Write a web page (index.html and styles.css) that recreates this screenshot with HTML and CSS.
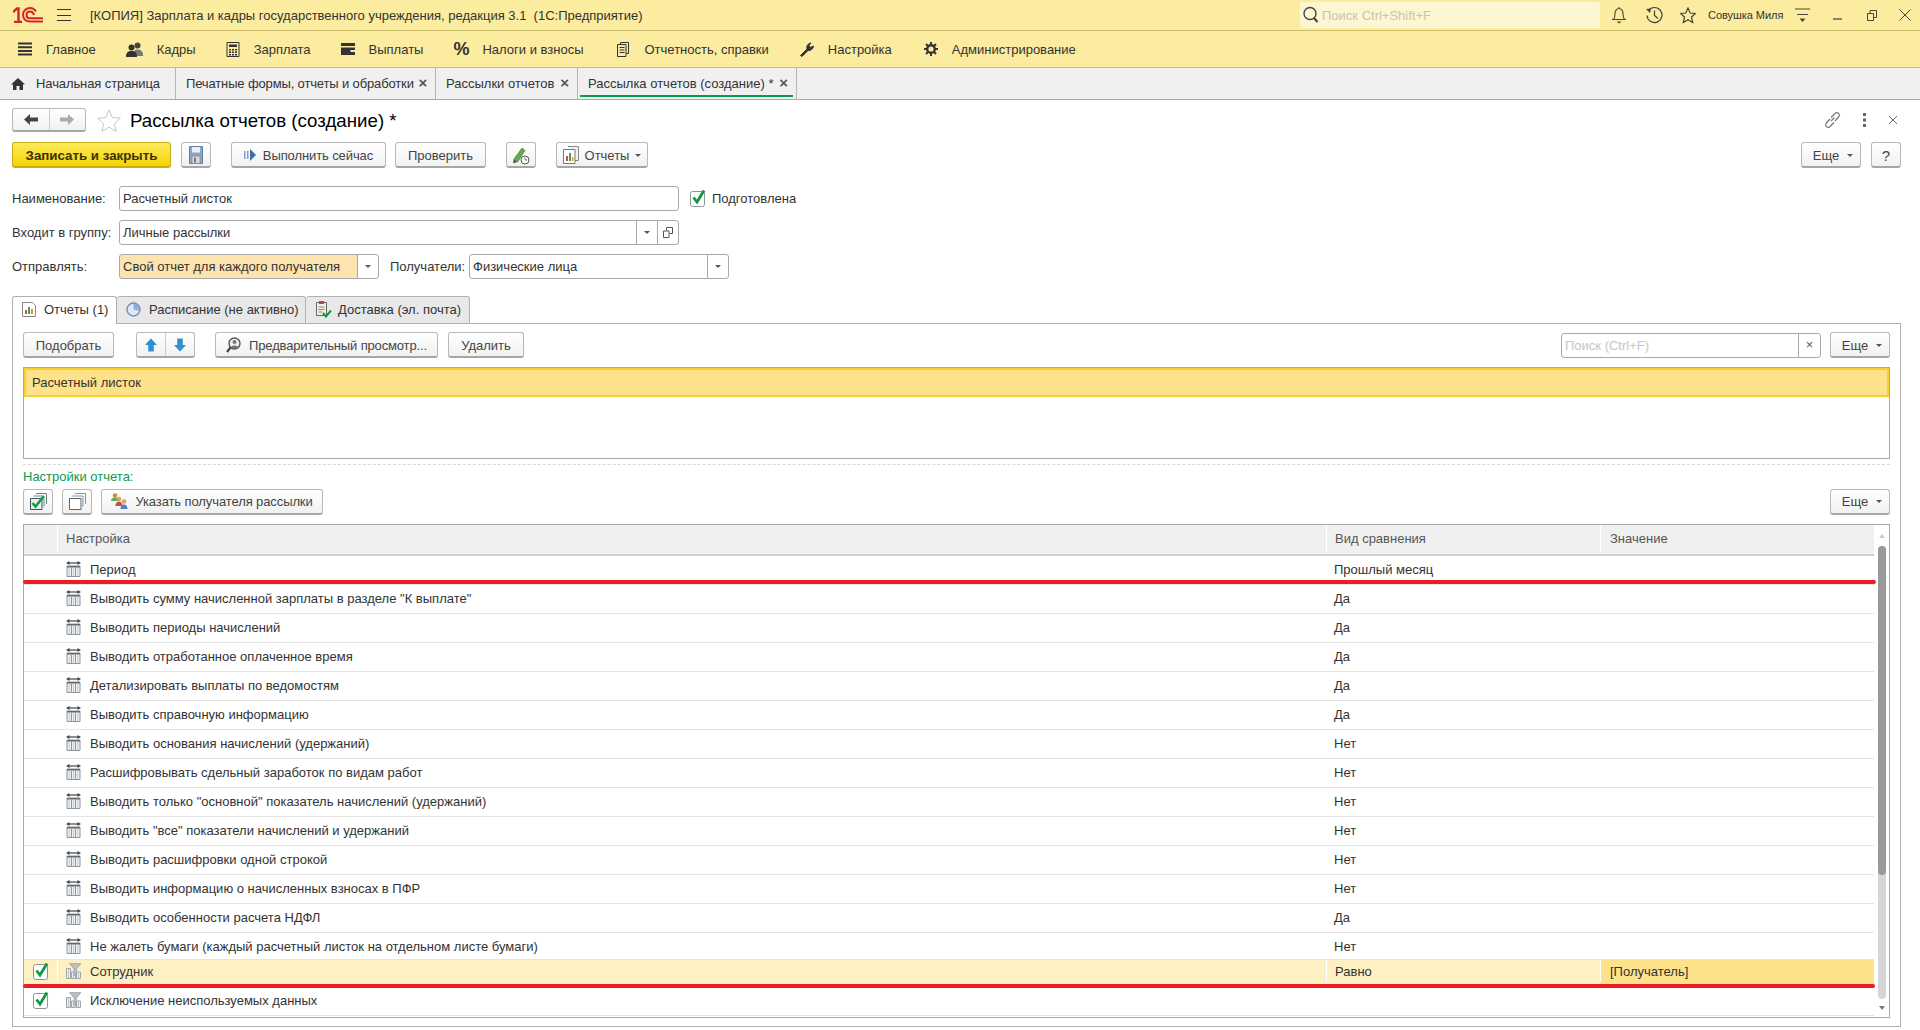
FILE: index.html
```html
<!DOCTYPE html>
<html lang="ru">
<head>
	<meta charset="utf-8">
	<title>Рассылка отчетов (создание)</title>
	<link rel="stylesheet" href="styles.css">
</head>
<body>
	<svg class="defs" width="0" height="0">
		<symbol id="i-field" viewBox="0 0 15 16">
			<path d="M2 2h11" fill="none" stroke="#444" stroke-width="1.200"/>
			<path d="M0 2L3.500 0v4zM15 2L11.500 0v4z" fill="#444"/>
			<path d="M1 5h13v10.500H1z" fill="#eef1f3" stroke="#8f979c"/>
			<path d="M1 5h13v1.500H1z" fill="#5f6a70"/>
			<path d="M5.500 6.500v9M9.500 6.500v9" stroke="#8f979c"/>
			<path d="M3.200 7v8M7.500 7v8M11.800 7v8" stroke="#c6ccd0"/>
		</symbol>
		<symbol id="i-filter" viewBox="0 0 15 16">
			<path d="M.5 5.500h4v10h-4zM5.500 9h4v6.500h-4zM10.500 9h4v6.500h-4z" fill="#e8ecee" stroke="#9fa6aa"/>
			<path d="M2.500 6v9M7.500 10v5M12.500 10v5" stroke="#c4cacd"/>
			<path d="M3.500 .5h11.500l-4.500 5.500v5.500l-2.500 1.500v-7z" fill="#b9bec1" stroke="#8e9498" stroke-width=".6"/>
		</symbol>
		<symbol id="i-check" viewBox="0 0 16 18">
			<rect x=".5" y="2.500" width="14" height="15" rx="2" fill="#fff" stroke="#8f9395"/>
			<path d="M3.500 8.500l3.500 4.500L14 1.500" fill="none" stroke="#0d9a45" stroke-width="2.800"/>
		</symbol>
	</svg>

	<div class="topbar">
		<svg class="logo" width="30" height="16" viewBox="0 0 30 16">
			<path d="M0 5l4-3.500h1.500V15M1 15h8" fill="none" stroke="#d8232a" stroke-width="2.400"/>
			<path d="M23 4.500C21.500 2 19 1 17 1c-3.800 0-7 2.800-7 6.800 0 4 3 6.700 7 6.700h13" fill="none" stroke="#d8232a" stroke-width="2"/>
			<path d="M21 8c-.8-2.500-2.300-3.500-4-3.500-2 0-3.500 1.500-3.500 3.500s1.500 3.300 3.500 3.300h13" fill="none" stroke="#d8232a" stroke-width="2"/>
		</svg>
		<div class="burger"></div>
		<div class="app-title">[КОПИЯ] Зарплата и кадры государственного учреждения, редакция 3.1&nbsp; (1С:Предприятие)</div>
		<div class="global-search">
			<svg width="16" height="18" viewBox="0 0 16 18"><circle cx="7" cy="7.500" r="6" fill="none" stroke="#444" stroke-width="1.400"/><path d="M11 12l3.500 4" stroke="#444" stroke-width="2"/></svg>
			<span>Поиск Ctrl+Shift+F</span>
		</div>
		<svg class="top-icon bell" width="16" height="18" viewBox="0 0 16 18"><path d="M1 13.500h14M2.500 13.500c1.500-2 1.500-3 1.500-6 0-3 2-5 4-5s4 2 4 5c0 3 0 4 1.500 6M8 1v1.500" fill="none" stroke="#444" stroke-width="1.100"/><path d="M5.500 15.500h5L8 17.500z" fill="#444"/></svg>
		<svg class="top-icon hist" width="18" height="18" viewBox="0 0 18 18"><path d="M3.500 4.500A7.500 7.500 0 1 1 2 9.500M9.500 4.500v5l3.500 3" fill="none" stroke="#444" stroke-width="1.200"/><path d="M1 3l5-.5-1 4.500z" fill="#444"/></svg>
		<svg class="top-icon star" width="16" height="17" viewBox="0 0 16 17"><path d="M8 1l2.200 5 5.300.5-4 3.500 1.200 5.500L8 12.700 3.300 15.500 4.500 10l-4-3.500L5.800 6z" fill="none" stroke="#444" stroke-width="1.200"/></svg>
		<div class="user">Совушка Миля</div>
		<svg class="top-icon ham2" width="15" height="14" viewBox="0 0 15 14"><path d="M0 1h15M2 6.500h11" stroke="#444" stroke-width="1.200"/><path d="M4.500 10.500h6L7.500 14z" fill="#444"/></svg>
		<svg class="top-icon win-min" width="10" height="10" viewBox="0 0 10 10"><path d="M0 9h9" stroke="#444" stroke-width="1.200"/></svg>
		<svg class="top-icon win-max" width="10" height="11" viewBox="0 0 10 11"><path d="M.5 3.500h6v7h-6zM3 3.500V.5h6.500v7h-3" fill="none" stroke="#444"/></svg>
		<svg class="top-icon win-close" width="12" height="12" viewBox="0 0 12 12"><path d="M.5.500l11 11M11.500.500l-11 11" stroke="#444"/></svg>
	</div>

	<div class="menubar">
		<div class="menu-item">
			<svg width="14" height="14" viewBox="0 0 14 14"><path d="M0 1.500h14M0 5.200h14M0 8.900h14M0 12.600h14" stroke="#333" stroke-width="2"/></svg>
			<span>Главное</span>
		</div>
		<div class="menu-item">
			<svg width="17" height="15" viewBox="0 0 17 15"><circle cx="11.500" cy="3.500" r="3" fill="#444"/><path d="M7 14c0-5 2-6.500 4.500-6.500S17 9 17 12.500V14z" fill="#777"/><circle cx="5.500" cy="5.500" r="3" fill="#333"/><path d="M0 15c0-4.500 2-6 5.500-6S11 10.500 11 15z" fill="#333"/></svg>
			<span>Кадры</span>
		</div>
		<div class="menu-item">
			<svg width="14" height="15" viewBox="0 0 14 15"><path d="M1 .5h12v14H1z" fill="none" stroke="#333"/><path d="M3 2.500h8v2.500H3z" fill="#333"/><path d="M3 7h2v1.500H3zM6 7h2v1.500H6zM9 7h2v1.500H9zM3 9.500h2V11H3zM6 9.500h2V11H6zM9 9.500h2V11H9zM3 12h2v1.500H3zM6 12h2v1.500H6zM9 12h2v1.500H9z" fill="#333"/></svg>
			<span>Зарплата</span>
		</div>
		<div class="menu-item">
			<svg width="14" height="12" viewBox="0 0 14 12"><path d="M0 0h14v3H0zM0 4.500h14V12H0z" fill="#333"/><path d="M9.500 7h4.500v2H9.500z" fill="#fbec9f"/></svg>
			<span>Выплаты</span>
		</div>
		<div class="menu-item">
			<span class="percent">%</span>
			<span>Налоги и взносы</span>
		</div>
		<div class="menu-item item-reports">
			<svg width="12" height="15" viewBox="0 0 12 15"><path d="M3.500 2.500V.5h8v11h-2" fill="none" stroke="#333"/><path d="M.5 2.500h8.500v12H.5z" fill="#fbec9f" stroke="#333"/><path d="M2.500 5.500h5M2.500 8h5M2.500 10.500h5" stroke="#333"/></svg>
			<span>Отчетность, справки</span>
		</div>
		<div class="menu-item">
			<svg width="15" height="15" viewBox="0 0 15 15"><path d="M1.500 13.500L8 7c-.8-2.500.5-5.500 4-6l-2 2.500 1.500 2L14.500 4c-.3 3-3 5-5.500 4.500L3 14.500z" fill="#333" stroke="#333"/></svg>
			<span>Настройка</span>
		</div>
		<div class="menu-item item-admin">
			<svg width="14" height="14" viewBox="0 0 14 14"><circle cx="7" cy="7" r="3.800" fill="none" stroke="#333" stroke-width="2.400"/><path d="M7 0v3M7 11v3M0 7h3M11 7h3M2 2l2 2M10 10l2 2M12 2l-2 2M4 10l-2 2" stroke="#333" stroke-width="2"/></svg>
			<span>Администрирование</span>
		</div>
	</div>

	<div class="tabbar">
		<div class="page-tab tab-home">
			<svg width="14" height="12" viewBox="0 0 14 12"><path d="M7 0L0 6.500h2V12h3.500V8h3v4H12V6.500h2z" fill="#333"/></svg>
			<span>Начальная страница</span>
		</div>
		<div class="page-tab tab-print"><span>Печатные формы, отчеты и обработки</span><i class="x">×</i></div>
		<div class="page-tab tab-list"><span>Рассылки отчетов</span><i class="x">×</i></div>
		<div class="page-tab tab-current"><span>Рассылка отчетов (создание) *</span><i class="x">×</i></div>
	</div>

	<div class="form">
		<div class="form-head">
			<div class="btn-group nav-group">
				<div class="seg"><svg width="14" height="11" viewBox="0 0 14 11"><path d="M0 5.500L6 0v3.500h8v4H6V11z" fill="#444"/></svg></div>
				<div class="seg"><svg width="14" height="11" viewBox="0 0 14 11"><path d="M14 5.500L8 0v3.500H0v4h8V11z" fill="#aaa"/></svg></div>
			</div>
			<svg class="fav" width="24" height="23" viewBox="0 0 24 23"><path d="M12 1l3.300 7.500 8 .7-6 5.300 1.800 7.800L12 18.200 4.900 22.300 6.700 14.500l-6-5.300 8-.7z" fill="#fff" stroke="#c8c8c8"/></svg>
			<h1>Рассылка отчетов (создание) *</h1>
			<div class="head-actions">
				<svg width="17" height="18" viewBox="0 0 17 18"><path d="M6 8l-4 4.500c-1.500 2 1.500 5 3.500 3.500L10 11.500M7 10l3.500-3.500M11 10l4-4.500c1.500-2-1.500-5-3.500-3.500L7 6.500" fill="none" stroke="#777" stroke-width="1.200"/></svg>
				<svg width="3" height="14" viewBox="0 0 3 14"><path d="M0 0h3v3H0zM0 5.500h3v3H0zM0 11h3v3H0z" fill="#666"/></svg>
				<svg width="10" height="10" viewBox="0 0 10 10"><path d="M1 1l8 8M9 1L1 9" stroke="#666"/></svg>
			</div>
		</div>

		<div class="toolbar main-toolbar">
			<div class="btn btn-default">Записать и закрыть</div>
			<div class="btn btn-icon"><svg width="14" height="18" viewBox="0 0 14 18"><path d="M.5.500h13v17H.5z" fill="#8aa7c9" stroke="#5f7fa6"/><path d="M3 1h8v5.500H3z" fill="#e9eff6"/><path d="M3 10h8v7.500H3z" fill="#d9d9d9" stroke="#777" stroke-width=".6"/><path d="M5 11.500h2v5H5z" fill="#777"/></svg></div>
			<div class="btn btn-run"><svg width="12" height="12" viewBox="0 0 12 12"><path d="M0 2h1.500v8H0zM3 2h1.500v8H3z" fill="#7a9fc8"/><path d="M6 0l6 6-6 6z" fill="#3d6ea5"/></svg>Выполнить сейчас</div>
			<div class="btn btn-check">Проверить</div>
			<div class="btn btn-icon btn-sched"><svg width="18" height="20" viewBox="0 0 18 20"><path d="M2 14L10 3l3 2.500-7 11-4.500 1.500z" fill="#6aa84f" stroke="#38761d" stroke-width=".6"/><path d="M1.500 18L2 14.500l3 2z" fill="#555"/><circle cx="13" cy="15" r="4" fill="#fff" stroke="#555"/><path d="M13 12.500V15h2" fill="none" stroke="#555" stroke-width=".8"/></svg></div>
			<div class="btn btn-reports"><svg width="16" height="18" viewBox="0 0 16 18"><path d="M5 .5h10.500v14H12" fill="#f2f2f2" stroke="#888"/><path d="M.5 3.500h11.500v14H.5z" fill="#fff" stroke="#777"/><path d="M3 10h2v5H3z" fill="#c0504d"/><path d="M6 7h2v8H6z" fill="#4e9a54"/><path d="M9 11h1.500v4H9z" fill="#c9a227"/></svg>Отчеты<i class="caret"></i></div>
			<div class="spacer"></div>
			<div class="btn btn-more">Еще<i class="caret"></i></div>
			<div class="btn btn-help">?</div>
		</div>

		<div class="field-row row-name">
			<label class="field-label">Наименование:</label>
			<div class="input input-wide"><span>Расчетный листок</span></div>
			<svg class="check-big" width="16" height="18" viewBox="0 0 16 18"><use href="#i-check"/></svg>
			<span class="check-label">Подготовлена</span>
		</div>
		<div class="field-row">
			<label class="field-label">Входит в группу:</label>
			<div class="input input-wide">
				<span>Личные рассылки</span>
				<div class="drop"><i class="caret"></i></div>
				<div class="drop"><svg width="10" height="11" viewBox="0 0 10 11"><path d="M3.500 3.500V.5h6v6h-3M.5 4h5.500v6.500H.5z" fill="none" stroke="#555"/></svg></div>
			</div>
		</div>
		<div class="field-row">
			<label class="field-label">Отправлять:</label>
			<div class="input input-send">
				<span>Свой отчет для каждого получателя</span>
				<div class="drop"><i class="caret"></i></div>
			</div>
			<label class="field-label label-to">Получатели:</label>
			<div class="input input-to">
				<span>Физические лица</span>
				<div class="drop"><i class="caret"></i></div>
			</div>
		</div>

		<div class="form-tabs">
			<div class="form-tab tab-on tab-reports">
				<svg width="14" height="15" viewBox="0 0 14 15"><path d="M.5.500h10l3 3v11H.5z" fill="#fff" stroke="#888"/><path d="M3 8h2v4H3z" fill="#c0504d"/><path d="M6 5h2v7H6z" fill="#4e9a54"/><path d="M9 7h2v5H9z" fill="#c9a227"/></svg>
				<span>Отчеты (1)</span>
			</div>
			<div class="form-tab tab-sched">
				<svg width="15" height="15" viewBox="0 0 15 15"><circle cx="7.500" cy="7.500" r="6.500" fill="#dfe8f4" stroke="#6d8fbe" stroke-width="1.400"/><path d="M7.500 7.500V1.500A6 6 0 0 1 13 9z" fill="#8fb0dc"/></svg>
				<span>Расписание (не активно)</span>
			</div>
			<div class="form-tab tab-deliv">
				<svg width="17" height="18" viewBox="0 0 17 18"><path d="M1.500 2.500h10v13h-10z" fill="#f5efe0" stroke="#666"/><path d="M4 1h5v3H4z" fill="#b04a3a"/><path d="M3.500 7h6M3.500 9.500h6M3.500 12h4" stroke="#888"/><path d="M8 13l3 3.500 5-6" fill="none" stroke="#0d9a45" stroke-width="2"/></svg>
				<span>Доставка (эл. почта)</span>
			</div>
		</div>

		<div class="panel">
			<div class="toolbar">
				<div class="btn btn-pick">Подобрать</div>
				<div class="btn-group move-group">
					<div class="seg"><svg width="12" height="14" viewBox="0 0 13 14"><path d="M6.500 0L13 7H9.500v7h-6V7H0z" fill="#2f8fd0"/></svg></div>
					<div class="seg"><svg width="12" height="14" viewBox="0 0 13 14"><path d="M6.500 14L13 7H9.500V0h-6v7H0z" fill="#2f8fd0"/></svg></div>
				</div>
				<div class="btn btn-preview"><svg width="16" height="17" viewBox="0 0 16 17"><circle cx="8.500" cy="6.500" r="5.500" fill="#eee" stroke="#555" stroke-width="1.400"/><circle cx="8.500" cy="5" r="2" fill="#777"/><path d="M5 10c1-2 6-2 7 0v1H5z" fill="#777"/><path d="M4.500 10.500L1 15" stroke="#444" stroke-width="2.200"/></svg>Предварительный просмотр...</div>
				<div class="btn btn-del">Удалить</div>
				<div class="spacer"></div>
				<div class="search-box"><span>Поиск (Ctrl+F)</span><div class="search-clear">×</div></div>
				<div class="btn btn-more">Еще<i class="caret"></i></div>
			</div>

			<div class="report-list">
				<div class="report-row">Расчетный листок</div>
			</div>
			<div class="dashed"></div>
			<div class="section-title">Настройки отчета:</div>

			<div class="toolbar settings-toolbar">
				<div class="btn btn-icon"><svg width="17" height="17" viewBox="0 0 17 17"><path d="M6 .5h10.500v10.500M3.500 3h10.500v10.500" fill="none" stroke="#6a8580" stroke-width="1"/><path d="M.5 5.500h11.500v11H.5z" fill="#e9f1ea" stroke="#456"/><path d="M2.500 10l3 3.500 8-10" fill="none" stroke="#0d9a45" stroke-width="2.400"/></svg></div>
				<div class="btn btn-icon"><svg width="17" height="17" viewBox="0 0 17 17"><path d="M6 .5h10.500v10.500M3.500 3h10.500v10.500" fill="none" stroke="#8a959e" stroke-width="1"/><path d="M.5 5.500h11.500v11H.5z" fill="#fff" stroke="#567"/></svg></div>
				<div class="btn btn-recipient"><svg width="17" height="16" viewBox="0 0 17 16"><circle cx="4" cy="2.500" r="2.300" fill="#c98f4a"/><path d="M0 8c0-2.500 2-3.500 4-3.500S8 5.500 8 8z" fill="#6aa84f"/><circle cx="8" cy="6" r="2.300" fill="#d6a565"/><path d="M4.500 13c0-3 1.500-4.500 3.500-4.500s3.500 1.500 3.500 4.500z" fill="#c0504d"/><circle cx="13" cy="8.500" r="2.300" fill="#d6a565"/><path d="M9.500 16c0-3 1.500-4.500 3.500-4.500s3.500 1.500 3.500 4.500z" fill="#4f81bd"/></svg>Указать получателя рассылки</div>
				<div class="spacer"></div>
				<div class="btn btn-more">Еще<i class="caret"></i></div>
			</div>

			<div class="grid">
				<div class="grid-main">
					<div class="grid-head">
						<div class="col-check"></div>
						<div class="col-name">Настройка</div>
						<div class="col-cmp">Вид сравнения</div>
						<div class="col-val">Значение</div>
					</div>
					<div class="grid-row"><div class="col-check"></div><div class="col-name"><svg width="15" height="16"><use href="#i-field"/></svg>Период</div><div class="col-cmp">Прошлый месяц</div><div class="col-val"></div></div>
					<div class="grid-row"><div class="col-check"></div><div class="col-name"><svg width="15" height="16"><use href="#i-field"/></svg>Выводить сумму начисленной зарплаты в разделе "К выплате"</div><div class="col-cmp">Да</div><div class="col-val"></div></div>
					<div class="grid-row"><div class="col-check"></div><div class="col-name"><svg width="15" height="16"><use href="#i-field"/></svg>Выводить периоды начислений</div><div class="col-cmp">Да</div><div class="col-val"></div></div>
					<div class="grid-row"><div class="col-check"></div><div class="col-name"><svg width="15" height="16"><use href="#i-field"/></svg>Выводить отработанное оплаченное время</div><div class="col-cmp">Да</div><div class="col-val"></div></div>
					<div class="grid-row"><div class="col-check"></div><div class="col-name"><svg width="15" height="16"><use href="#i-field"/></svg>Детализировать выплаты по ведомостям</div><div class="col-cmp">Да</div><div class="col-val"></div></div>
					<div class="grid-row"><div class="col-check"></div><div class="col-name"><svg width="15" height="16"><use href="#i-field"/></svg>Выводить справочную информацию</div><div class="col-cmp">Да</div><div class="col-val"></div></div>
					<div class="grid-row"><div class="col-check"></div><div class="col-name"><svg width="15" height="16"><use href="#i-field"/></svg>Выводить основания начислений (удержаний)</div><div class="col-cmp">Нет</div><div class="col-val"></div></div>
					<div class="grid-row"><div class="col-check"></div><div class="col-name"><svg width="15" height="16"><use href="#i-field"/></svg>Расшифровывать сдельный заработок по видам работ</div><div class="col-cmp">Нет</div><div class="col-val"></div></div>
					<div class="grid-row"><div class="col-check"></div><div class="col-name"><svg width="15" height="16"><use href="#i-field"/></svg>Выводить только "основной" показатель начислений (удержаний)</div><div class="col-cmp">Нет</div><div class="col-val"></div></div>
					<div class="grid-row"><div class="col-check"></div><div class="col-name"><svg width="15" height="16"><use href="#i-field"/></svg>Выводить "все" показатели начислений и удержаний</div><div class="col-cmp">Нет</div><div class="col-val"></div></div>
					<div class="grid-row"><div class="col-check"></div><div class="col-name"><svg width="15" height="16"><use href="#i-field"/></svg>Выводить расшифровки одной строкой</div><div class="col-cmp">Нет</div><div class="col-val"></div></div>
					<div class="grid-row"><div class="col-check"></div><div class="col-name"><svg width="15" height="16"><use href="#i-field"/></svg>Выводить информацию о начисленных взносах в ПФР</div><div class="col-cmp">Нет</div><div class="col-val"></div></div>
					<div class="grid-row"><div class="col-check"></div><div class="col-name"><svg width="15" height="16"><use href="#i-field"/></svg>Выводить особенности расчета НДФЛ</div><div class="col-cmp">Да</div><div class="col-val"></div></div>
					<div class="grid-row row-tall"><div class="col-check"></div><div class="col-name"><svg width="15" height="16"><use href="#i-field"/></svg>Не жалеть бумаги (каждый расчетный листок на отдельном листе бумаги)</div><div class="col-cmp">Нет</div><div class="col-val"></div></div>
					<div class="grid-row row-current"><div class="col-check"><svg width="16" height="18"><use href="#i-check"/></svg></div><div class="col-name"><svg width="15" height="16"><use href="#i-filter"/></svg>Сотрудник</div><div class="col-cmp">Равно</div><div class="col-val">[Получатель]</div></div>
					<div class="grid-row"><div class="col-check"><svg width="16" height="18"><use href="#i-check"/></svg></div><div class="col-name"><svg width="15" height="16"><use href="#i-filter"/></svg>Исключение неиспользуемых данных</div><div class="col-cmp"></div><div class="col-val"></div></div>
				</div>
				<div class="grid-scroll">
					<i class="arrow-up"></i>
					<div class="scroll-track"><div class="scroll-thumb"></div></div>
					<i class="arrow-down"></i>
				</div>
				<div class="mark mark-1"></div>
				<div class="mark mark-2"></div>
			</div>
		</div>
	</div>
</body>
</html>
```

FILE: styles.css
```css
html, body {
	margin: 0;
	padding: 0;
	height: 1030px;
	overflow: hidden;
}

body {
	background: #fff;
	color: #333;
	font-family: "Liberation Sans", Arial, sans-serif;
	font-size: 13px;
}

.defs {
	position: absolute;
}

svg {
	flex: none;
}

/* top window bar */

.topbar {
	display: flex;
	align-items: center;
	height: 30px;
	background: #fbec9f;
	border-bottom: 1px solid #cdbd6b;
}

.logo {
	margin-left: 13px;
}

.burger {
	width: 14px;
	height: 2px;
	margin-left: 14px;
	border-top: 1px solid #333;
	border-bottom: 1px solid #333;
	padding: 4px 0;
	background: linear-gradient(#333, #333) center / 100% 1px no-repeat;
}

.app-title {
	margin-left: 19px;
	width: 1210px;
	white-space: nowrap;
}

.global-search {
	display: flex;
	align-items: center;
	gap: 3px;
	width: 297px;
	height: 26px;
	padding-left: 3px;
	background: #fdf6d2;
	border-radius: 2px;
	color: #c9c5ad;
}

.top-icon {
	display: block;
}

.bell {
	margin-left: 11px;
}

.hist {
	margin-left: 18px;
}

.star {
	margin-left: 17px;
}

.user {
	margin-left: 12px;
	width: 87px;
	font-size: 11px;
	letter-spacing: -.05px;
	white-space: nowrap;
}

.win-min {
	margin-left: 23px;
}

.win-max {
	margin-left: 24px;
}

.win-close {
	margin-left: 22px;
}

/* section menu */

.menubar {
	display: flex;
	align-items: center;
	height: 36px;
	padding-left: 18px;
	background: #fbec9f;
	border-bottom: 1px solid #cdbd6b;
}

.menu-item {
	display: flex;
	align-items: center;
	gap: 14px;
	margin-right: 30px;
	white-space: nowrap;
}

.item-reports {
	margin-left: 3px;
	gap: 16px;
}

.item-admin {
	margin-left: 2px;
}

.percent {
	font-size: 18px;
	font-weight: bold;
	width: 15px;
}

/* open pages */

.tabbar {
	display: flex;
	height: 31px;
	background: #f0f0f0;
	border-bottom: 1px solid #a9a9a9;
}

.page-tab {
	display: flex;
	align-items: center;
	position: relative;
	box-sizing: border-box;
	padding-left: 9px;
	border-right: 1px solid #b5b5b5;
	white-space: nowrap;
}

.page-tab .x {
	position: absolute;
	right: 8px;
	top: 6px;
	font-style: normal;
	font-weight: bold;
	font-size: 15px;
	color: #555;
}

.tab-home {
	width: 176px;
	padding-left: 11px;
	gap: 11px;
	letter-spacing: -.1px;
}

.tab-print {
	width: 260px;
	padding-left: 10px;
	letter-spacing: -.14px;
}

.tab-list {
	width: 142px;
	padding-left: 10px;
}

.tab-current {
	width: 219px;
	padding-left: 10px;
}

.tab-current:after {
	content: "";
	position: absolute;
	left: 2px;
	right: 3px;
	bottom: 2px;
	height: 2px;
	background: #0a9a50;
}

/* form */

.form {
	padding: 8px 19px 0 12px;
}

.form-head {
	display: flex;
	align-items: center;
	height: 24px;
}

.fav {
	margin-left: 11px;
}

h1 {
	margin: 1px 0 0 9px;
	font-size: 18.700px;
	font-weight: normal;
	color: #000;
	white-space: nowrap;
}

.head-actions {
	display: flex;
	align-items: center;
	gap: 22px;
	margin-left: auto;
	margin-right: 3px;
}

.toolbar {
	display: flex;
	align-items: stretch;
	height: 26px;
}

.main-toolbar {
	margin-top: 10px;
}

.spacer {
	flex: 1;
}

.btn, .btn-group {
	box-sizing: border-box;
	border: 1px solid #b9b9b9;
	border-bottom: 2px solid #a6a6a6;
	border-radius: 3px;
	background: linear-gradient(#fff, #f1f1f1);
	color: #444;
}

.btn {
	display: flex;
	align-items: center;
	justify-content: center;
	gap: 7px;
	padding-top: 1px;
	white-space: nowrap;
}

.btn-default {
	width: 159px;
	background: linear-gradient(#ffe95c, #f6d400);
	border-color: #c8ad1c;
	color: #3b3200;
	font-weight: bold;
	font-size: 13.300px;
}

.btn-icon {
	width: 30px;
	margin-left: 10px;
}

.btn-run {
	width: 155px;
	margin-left: 20px;
	letter-spacing: -.1px;
}

.btn-check {
	width: 91px;
	margin-left: 9px;
}

.btn-sched {
	margin-left: 20px;
}

.btn-reports {
	width: 92px;
	margin-left: 20px;
	gap: 6px;
}

.btn-more {
	width: 60px;
	gap: 8px;
	padding-left: 4px;
}

.btn-help {
	width: 30px;
	margin-left: 10px;
	font-size: 15px;
}

.caret {
	display: inline-block;
	width: 0;
	height: 0;
	border-left: 3px solid transparent;
	border-right: 3px solid transparent;
	border-top: 3px solid #555;
}

.btn-group {
	display: flex;
	overflow: hidden;
}

.seg {
	display: flex;
	align-items: center;
	justify-content: center;
	flex: 1;
}

.seg + .seg {
	border-left: 1px solid #ccc;
}

.nav-group {
	width: 74px;
	height: 24px;
}

.field-row {
	display: flex;
	align-items: center;
	height: 25px;
	margin-top: 9px;
}

.row-name {
	margin-top: 18px;
}

.field-label {
	width: 107px;
	white-space: nowrap;
}

.input {
	display: flex;
	align-items: center;
	box-sizing: border-box;
	height: 25px;
	padding-left: 3px;
	border: 1px solid #a9a9a9;
	border-radius: 3px;
	background: #fff;
	white-space: nowrap;
}

.input > span {
	flex: 1;
}

.input-wide {
	width: 560px;
}

.input-send {
	width: 260px;
	background: linear-gradient(to right, #fde3ad 238px, #fff 238px);
}

.input-to {
	width: 260px;
}

.label-to {
	width: 79px;
	margin-left: 11px;
}

.drop {
	display: flex;
	align-items: center;
	justify-content: center;
	width: 20px;
	height: 23px;
	border-left: 1px solid #a9a9a9;
}

.check-big {
	margin-left: 11px;
	margin-top: -2px;
}

.check-label {
	margin-left: 6px;
}

/* inner tabs */

.form-tabs {
	display: flex;
	height: 27px;
	margin-top: 17px;
}

.form-tab {
	display: flex;
	align-items: center;
	box-sizing: border-box;
	height: 28px;
	gap: 8px;
	padding-bottom: 2px;
	border: 1px solid #b0b0b0;
	border-left: 0;
	border-radius: 3px 3px 0 0;
	background: #e8e8e8;
	white-space: nowrap;
}

.tab-on {
	position: relative;
	z-index: 1;
	border-left: 1px solid #b0b0b0;
	border-bottom: 0;
	background: #fff;
}

.tab-reports {
	width: 105px;
	padding-left: 9px;
}

.tab-sched {
	width: 189px;
	padding-left: 9px;
}

.tab-deliv {
	width: 164px;
	padding-left: 9px;
	gap: 6px;
}

.panel {
	box-sizing: border-box;
	height: 704px;
	padding: 8px 10px 0 10px;
	border: 1px solid #b0b0b0;
}

.btn-pick {
	width: 91px;
}

.move-group {
	width: 59px;
	margin-left: 22px;
}

.btn-preview {
	width: 223px;
	margin-left: 20px;
	letter-spacing: -.15px;
}

.btn-del {
	width: 76px;
	margin-left: 10px;
}

.search-box {
	display: flex;
	align-items: center;
	box-sizing: border-box;
	width: 260px;
	height: 25px;
	margin-top: 1px;
	margin-right: 9px;
	padding-left: 3px;
	border: 1px solid #a9a9a9;
	border-radius: 3px;
	color: #c6c6c6;
}

.search-box span {
	flex: 1;
}

.search-clear {
	width: 21px;
	height: 23px;
	line-height: 21px;
	text-align: center;
	border-left: 1px solid #a9a9a9;
	color: #555;
}

.report-list {
	box-sizing: border-box;
	height: 92px;
	margin-top: 9px;
	border: 1px solid #a9a9a9;
}

.report-row {
	box-sizing: border-box;
	height: 29px;
	line-height: 25px;
	padding-left: 6px;
	background: #fde28a;
	border: 2px solid #f8cd2c;
}

.dashed {
	margin-top: 5px;
	border-top: 1px dashed #d8d8d8;
}

.section-title {
	height: 24px;
	line-height: 24px;
	color: #0a9a50;
}

.settings-toolbar .btn {
	padding-top: 0;
	padding-bottom: 1px;
}

.settings-toolbar .btn-icon:first-child {
	margin-left: 0;
}

.settings-toolbar .btn-icon + .btn-icon {
	margin-left: 9px;
}

.btn-recipient {
	width: 222px;
	margin-left: 9px;
	letter-spacing: -.1px;
}

/* settings grid */

.grid {
	display: flex;
	position: relative;
	box-sizing: border-box;
	height: 494px;
	margin-top: 9px;
	border: 1px solid #a9a9a9;
}

.grid-main {
	flex: 1;
}

.grid-head, .grid-row {
	display: flex;
	box-sizing: border-box;
}

.grid-head {
	height: 31px;
	padding-bottom: 2px;
	background: #f0f0f0;
	border-bottom: 2px solid #cfcfcf;
	color: #555;
}

.grid-head .col-name {
	padding-left: 8px;
}

.grid-row {
	height: 29px;
	padding-bottom: 2px;
	border-bottom: 1px solid #e4e4e4;
}

.row-tall {
	height: 27px;
	padding-bottom: 0;
}

.row-current {
	height: 27px;
	padding-bottom: 5px;
	border-bottom: 0;
	background: #fdf1c3;
}

.row-current .col-val {
	box-shadow: 0 5px 0 #fde28a;
	background: #fde28a;
}

.row-current .col-name {
	padding-left: 8px;
}

.col-check, .col-name, .col-cmp, .col-val {
	display: flex;
	align-items: center;
	box-sizing: border-box;
	white-space: nowrap;
}

.col-check {
	width: 33px;
	justify-content: center;
}

.col-name {
	flex: 1;
	gap: 9px;
	padding-left: 9px;
}

.col-cmp {
	width: 274px;
	padding-left: 8px;
}

.col-val {
	width: 274px;
	padding-left: 9px;
}

.grid-head > div + div, .row-current > div + div {
	border-left: 1px solid #fff;
}

.grid-scroll {
	display: flex;
	flex-direction: column;
	align-items: center;
	width: 15px;
}

.arrow-up, .arrow-down {
	display: block;
	width: 0;
	height: 0;
	border-left: 3px solid transparent;
	border-right: 3px solid transparent;
}

.arrow-up {
	margin-top: 9px;
	border-bottom: 4px solid #ccc;
}

.arrow-down {
	margin-top: 7px;
	margin-bottom: 7px;
	border-top: 4px solid #777;
}

.scroll-track {
	flex: 1;
	width: 8px;
	margin-top: 8px;
	background: #d6d6d6;
	border-radius: 4px;
}

.scroll-thumb {
	height: 329px;
	background: #9a9a9a;
	border-radius: 4px;
}

/* red marks drawn over the grid */

.mark {
	position: absolute;
	left: -1px;
	height: 4px;
	background: #ed1c24;
	border-radius: 2px;
}

.mark-1 {
	top: 55px;
	width: 1853px;
}

.mark-2 {
	top: 459px;
	width: 1852px;
}
```
